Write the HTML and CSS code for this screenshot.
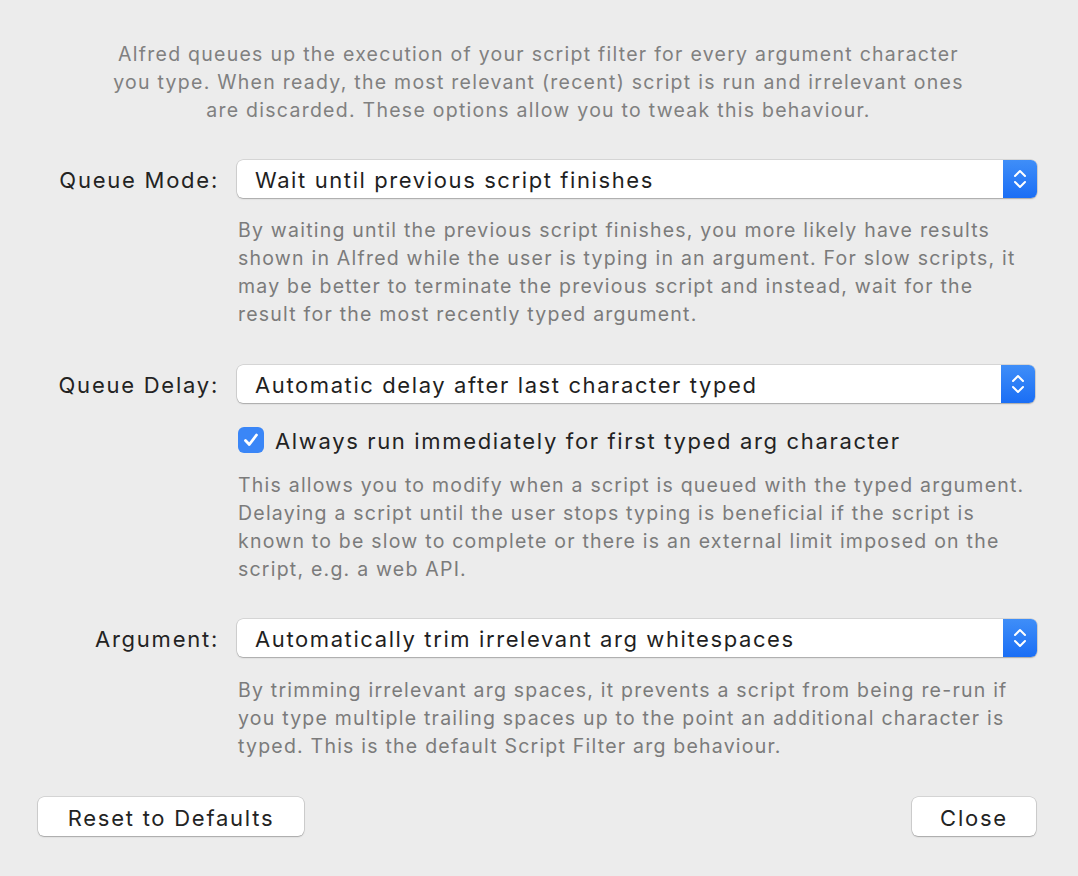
FILE: index.html
```html
<!DOCTYPE html>
<html>
<head>
<meta charset="utf-8">
<link rel="stylesheet" href="styles.css">
</head>
<body>
<div class="panel">
  <p class="intro">Alfred queues up the execution of your script filter for every argument character<br>you type. When ready, the most relevant (recent) script is run and irrelevant ones<br>are discarded. These options allow you to tweak this behaviour.</p>

  <div class="row r1">
    <div class="label">Queue Mode:</div>
    <div class="select"><span class="value">Wait until previous script finishes</span><span class="stepper"><svg width="14" height="24" viewBox="0 0 14 24"><path d="M2 9 L7 4 L12 9" /><path d="M2 15 L7 20 L12 15" /></svg></span></div>
  </div>
  <p class="desc d1">By waiting until the previous script finishes, you more likely have results<br>shown in Alfred while the user is typing in an argument. For slow scripts, it<br>may be better to terminate the previous script and instead, wait for the<br>result for the most recently typed argument.</p>

  <div class="row r2">
    <div class="label">Queue Delay:</div>
    <div class="select narrow"><span class="value">Automatic delay after last character typed</span><span class="stepper"><svg width="14" height="24" viewBox="0 0 14 24"><path d="M2 9 L7 4 L12 9" /><path d="M2 15 L7 20 L12 15" /></svg></span></div>
  </div>
  <div class="check">
    <span class="box"><svg width="20" height="20" viewBox="0 0 20 20"><path d="M4.5 10.5 L8.3 14.5 L15.5 5" /></svg></span>
    <span class="check-label">Always run immediately for first typed arg character</span>
  </div>
  <p class="desc d2">This allows you to modify when a script is queued with the typed argument.<br>Delaying a script until the user stops typing is beneficial if the script is<br>known to be slow to complete or there is an external limit imposed on the<br>script, e.g. a web API.</p>

  <div class="row r3">
    <div class="label">Argument:</div>
    <div class="select"><span class="value">Automatically trim irrelevant arg whitespaces</span><span class="stepper"><svg width="14" height="24" viewBox="0 0 14 24"><path d="M2 9 L7 4 L12 9" /><path d="M2 15 L7 20 L12 15" /></svg></span></div>
  </div>
  <p class="desc d3">By trimming irrelevant arg spaces, it prevents a script from being re-run if<br>you type multiple trailing spaces up to the point an additional character is<br>typed. This is the default Script Filter arg behaviour.</p>

  <div class="buttons">
    <button class="btn reset">Reset to Defaults</button>
    <button class="btn close">Close</button>
  </div>
</div>
</body>
</html>
```
FILE: styles.css
```css
html, body {
  margin: 0;
  padding: 0;
  background: #ececec;
}
body {
  width: 1078px;
  height: 876px;
  overflow: hidden;
  font-family: Inter, "Noto Sans", sans-serif;
}
.panel {
  padding: 40px 41px 0 38px;
  display: flex;
  flex-direction: column;
}
.intro {
  margin: 0;
  text-align: center;
  font-size: 19.5px;
  letter-spacing: 1.26px;
  line-height: 28px;
  color: #808080;
  padding-left: 2px;
}
.row {
  display: flex;
  align-items: center;
  height: 38px;
}
.r1 { margin-top: 36px; }
.r2 { margin-top: 37px; }
.r3 { margin-top: 36px; }
.label {
  width: 181px;
  text-align: right;
  padding-right: 0;
  font-size: 22px;
  letter-spacing: 1.75px;
  color: #232323;
  box-sizing: border-box;
  flex: none;
  padding-top: 2px;
}
.select {
  flex: none;
  width: 800px;
  height: 38px;
  box-sizing: border-box;
  display: flex;
  align-items: stretch;
  background: #fff;
  border-radius: 6px;
  box-shadow: 0 0 0 0.5px rgba(0,0,0,0.18), 0 1px 1.5px rgba(0,0,0,0.22);
  margin-left: 18px;
  overflow: hidden;
}
.select.narrow { width: 798px; }
.value {
  flex: 1;
  display: flex;
  align-items: center;
  padding-left: 18px;
  padding-top: 2px;
  font-size: 22px;
  letter-spacing: 1.6px;
  color: #1f1f1f;
}
.stepper {
  width: 34px;
  flex: none;
  background: linear-gradient(#3f8ef8, #1a6ef5);
  display: flex;
  align-items: center;
  justify-content: center;
}
.stepper path {
  fill: none;
  stroke: #fff;
  stroke-width: 2;
  stroke-linecap: round;
  stroke-linejoin: round;
}
.desc {
  margin: 0;
  margin-left: 200px;
  font-size: 19.5px;
  letter-spacing: 1.22px;
  line-height: 28px;
  color: #7b7b7b;
}
.d1 { margin-top: 18px; }
.d2 { margin-top: 18px; }
.d3 { margin-top: 19px; }
.check {
  display: flex;
  align-items: center;
  margin-left: 200px;
  margin-top: 24px;
  height: 26px;
}
.box {
  width: 26px;
  height: 26px;
  border-radius: 6px;
  background: #3a86f7;
  display: flex;
  align-items: center;
  justify-content: center;
  flex: none;
}
.box path {
  fill: none;
  stroke: #fff;
  stroke-width: 2.8;
  stroke-linecap: round;
  stroke-linejoin: round;
}
.check-label {
  margin-left: 11px;
  padding-top: 2px;
  font-size: 22px;
  letter-spacing: 1.65px;
  color: #232323;
}
.buttons {
  display: flex;
  justify-content: space-between;
  margin-top: 37px;
}
.btn {
  height: 39px;
  background: #fff;
  border: none;
  border-radius: 6px;
  box-shadow: 0 0 0 0.5px rgba(0,0,0,0.2), 0 1px 1.5px rgba(0,0,0,0.22);
  font-family: Inter, "Noto Sans", sans-serif;
  font-size: 22px;
  letter-spacing: 1.75px;
  color: #232323;
  padding: 2px 0 0 0;
}
.reset { width: 266px; }
.close { width: 124px; margin-right: 1px; }
```
